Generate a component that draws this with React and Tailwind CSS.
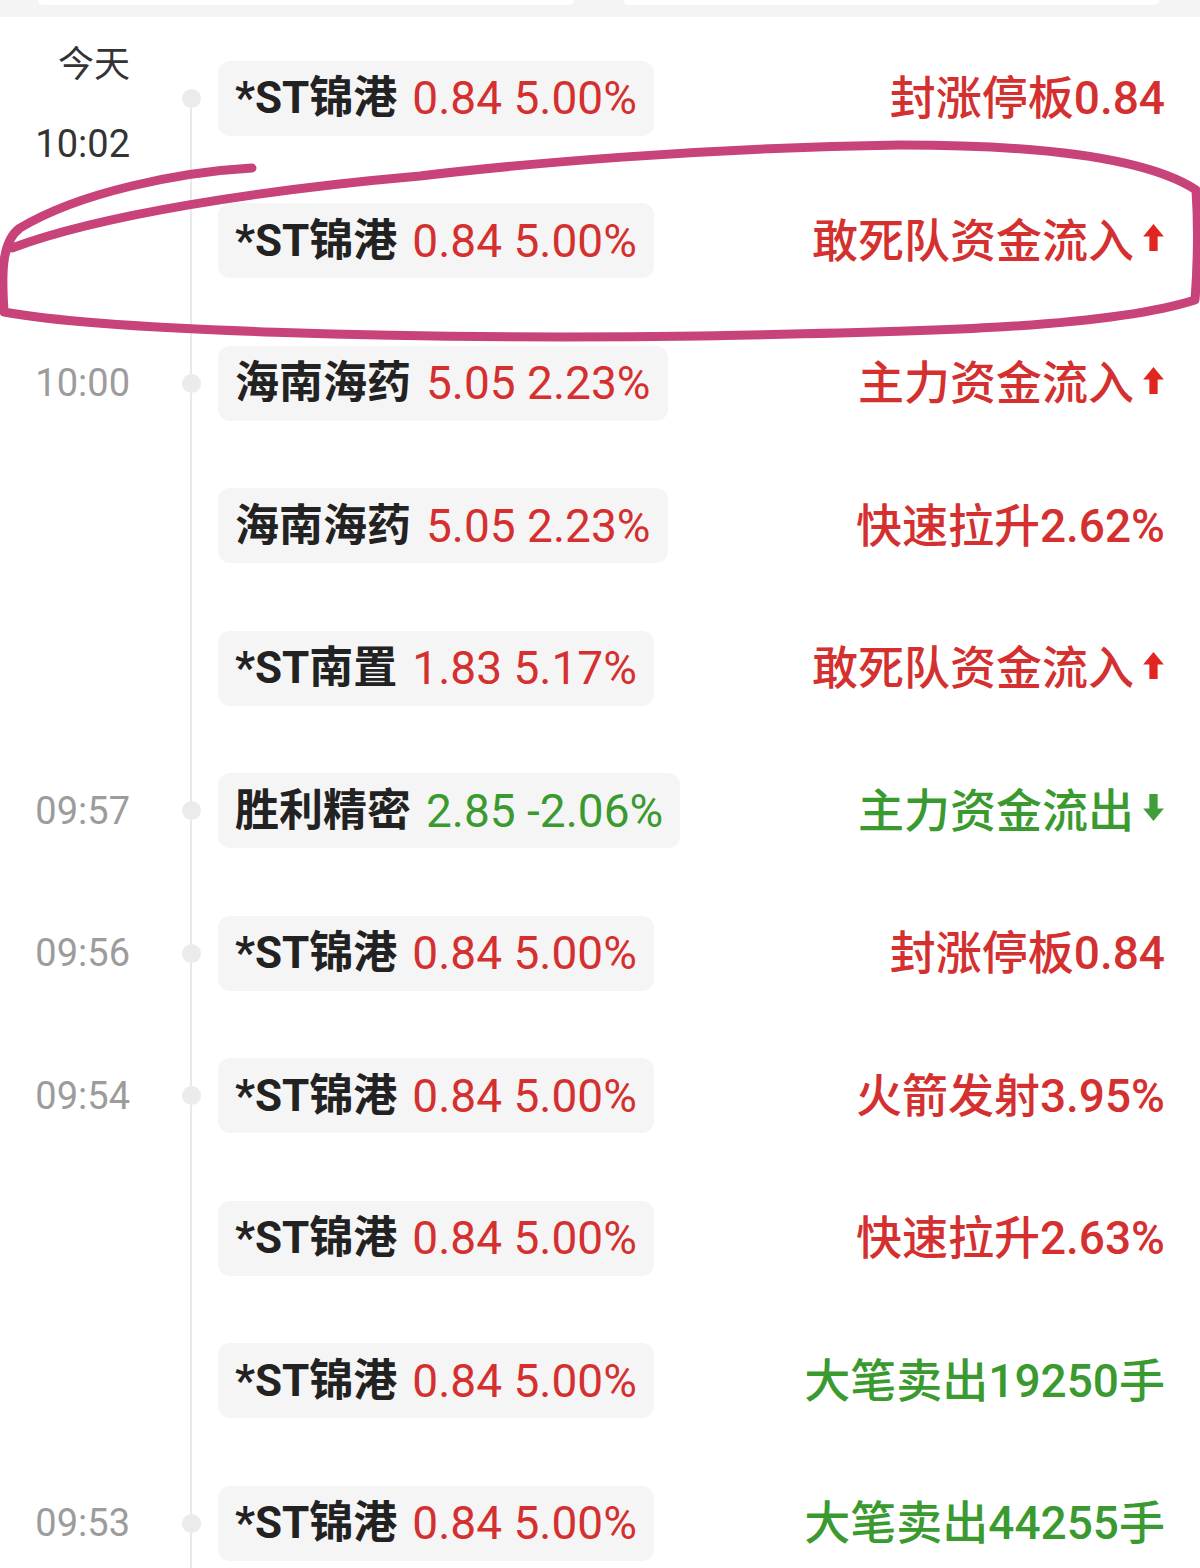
import React from 'react';

const RED = 'text-[#d3302f]';
const GREEN = 'text-[#3b9a2f]';

const rows = [
  { time: 'first', dot: 'top', name: '*ST锦港', price: '0.84', pct: '5.00%', up: true, note: '封涨停板0.84' },
  { name: '*ST锦港', price: '0.84', pct: '5.00%', up: true, note: '敢死队资金流入', arrow: 'up' },
  { time: '10:00', dot: true, name: '海南海药', price: '5.05', pct: '2.23%', up: true, note: '主力资金流入', arrow: 'up' },
  { name: '海南海药', price: '5.05', pct: '2.23%', up: true, note: '快速拉升2.62%' },
  { name: '*ST南置', price: '1.83', pct: '5.17%', up: true, note: '敢死队资金流入', arrow: 'up' },
  { time: '09:57', dot: true, name: '胜利精密', price: '2.85', pct: '-2.06%', up: false, note: '主力资金流出', arrow: 'down', noteGreen: true },
  { time: '09:56', dot: true, name: '*ST锦港', price: '0.84', pct: '5.00%', up: true, note: '封涨停板0.84' },
  { time: '09:54', dot: true, name: '*ST锦港', price: '0.84', pct: '5.00%', up: true, note: '火箭发射3.95%' },
  { name: '*ST锦港', price: '0.84', pct: '5.00%', up: true, note: '快速拉升2.63%' },
  { name: '*ST锦港', price: '0.84', pct: '5.00%', up: true, note: '大笔卖出19250手', noteGreen: true },
  { time: '09:53', dot: true, name: '*ST锦港', price: '0.84', pct: '5.00%', up: true, note: '大笔卖出44255手', noteGreen: true },
];

// block arrow used after the fund-flow notes
const Arrow = ({ dir }) => (
  <svg
    width="23"
    height="29"
    viewBox="0 0 22 28"
    className={dir === 'down' ? 'ml-[8px] rotate-180 -translate-y-[3px]' : 'ml-[8px] -translate-y-[3px]'}
  >
    <path d="M11 1 L21 13 H15 V27 H7 V13 H1 Z" fill={dir === 'down' ? '#3f9d3a' : '#e0261f'} />
  </svg>
);

const Timeline = ({ dot }) => (
  <div className="ml-[51px] w-[20px] h-full flex flex-col items-center">
    <div className={dot === 'top' ? 'flex-1 w-[2px]' : 'flex-1 w-[2px] bg-[#e9e9e9]'} />
    {dot ? <div className="w-[19px] h-[19px] rounded-full bg-[#ebebeb]" /> : <div className="w-[2px] h-[19px] bg-[#e9e9e9]" />}
    <div className="flex-1 w-[2px] bg-[#e9e9e9]" />
  </div>
);

function Row({ row }) {
  return (
    <div className="h-[142.5px] flex items-center">
      <div className="w-[130px] h-full flex flex-col justify-center items-end text-[38px] leading-[40px]">
        {row.time === 'first' ? (
          <div className="self-stretch h-full flex flex-col items-end pt-[18px] text-[#333]">
            <span className="text-[36px] leading-[40px]">今天</span>
            <span className="mt-[39px]">10:02</span>
          </div>
        ) : (
          <span className="text-[#9c9c9c]">{row.time}</span>
        )}
      </div>
      <Timeline dot={row.dot} />
      <div className="ml-[17px] h-[75px] rounded-[12px] bg-[#f5f5f5] px-[17px] flex items-center text-[44px] leading-none">
        <span className="font-bold text-[#222]">{row.name}</span>
        <span className={`ml-[15px] text-[46px] ${row.up ? RED : GREEN}`}>
          {row.price} {row.pct}
        </span>
      </div>
      <div className={`ml-auto pr-[35px] flex items-center text-[46px] leading-none font-medium ${row.noteGreen ? GREEN : RED}`}>
        <span>{row.note}</span>
        {row.arrow && <Arrow dir={row.arrow} />}
      </div>
    </div>
  );
}

export default function App() {
  return (
    <div
      className="relative w-[1200px] h-[1568px] overflow-hidden bg-white"
      style={{ fontFamily: 'Roboto, "Noto Sans CJK SC", sans-serif' }}
    >
      <div className="h-[17px] bg-[#f4f4f4] flex items-start gap-[50px] px-[38px]">
        <div className="w-[536px] h-[5px] bg-white rounded-b-[8px]" />
        <div className="w-[535px] h-[5px] bg-white rounded-b-[8px]" />
      </div>
      <div className="pt-[10px]">
        {rows.map((row, i) => (
          <Row key={i} row={row} />
        ))}
      </div>
      {/* hand-drawn highlight loop over the second item */}
      <svg className="absolute left-0 top-0 pointer-events-none" width="1200" height="400" viewBox="0 0 1200 400">
        <path
          d="M252 168 C180 172 80 192 20 228 C0 242 2 280 4 312 C100 330 400 340 700 336 C900 332 1100 330 1195 300 C1198 260 1198 220 1196 190 C1150 160 1050 145 900 145 C700 148 520 164 420 176 C260 190 100 215 12 248"
          fill="none"
          stroke="#c8437a"
          strokeWidth="9"
          strokeLinecap="round"
          strokeLinejoin="round"
        />
      </svg>
    </div>
  );
}
